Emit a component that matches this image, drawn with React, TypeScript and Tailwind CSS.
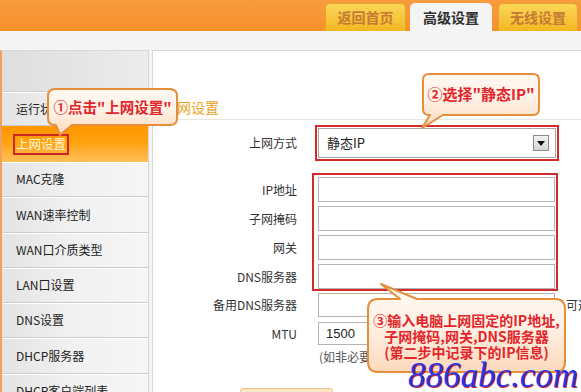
import React from "react";

function calloutPath(
  w: number,
  h: number,
  r: number,
  side: "top" | "bottom",
  b1: number,
  b2: number,
  tx: number,
  ty: number
) {
  if (side === "bottom") {
    return `M ${r} 0 H ${w - r} Q ${w} 0 ${w} ${r} V ${h - r} Q ${w} ${h} ${w - r} ${h} H ${b2} L ${tx} ${ty} L ${b1} ${h} H ${r} Q 0 ${h} 0 ${h - r} V ${r} Q 0 0 ${r} 0 Z`;
  }
  return `M ${r} 0 H ${b1} L ${tx} ${ty} L ${b2} 0 H ${w - r} Q ${w} 0 ${w} ${r} V ${h - r} Q ${w} ${h} ${w - r} ${h} H ${r} Q 0 ${h} 0 ${h - r} V ${r} Q 0 0 ${r} 0 Z`;
}

function Bubble({
  id,
  w,
  h,
  d,
}: {
  id: string;
  w: number;
  h: number;
  d: string;
}) {
  return (
    <svg
      width={w}
      height={h}
      viewBox={`0 0 ${w} ${h}`}
      className="absolute left-0 top-0 overflow-visible"
    >
      <defs>
        <linearGradient id={id} x1="0" y1="0" x2="0" y2="1">
          <stop offset="0" stopColor="#fff9f3" />
          <stop offset="0.5" stopColor="#fff0e3" />
          <stop offset="1" stopColor="#fcd9bc" />
        </linearGradient>
      </defs>
      <path d={d} fill={`url(#${id})`} stroke="#e58e3c" strokeWidth="2" strokeLinejoin="round" />
    </svg>
  );
}

const sideItems: { label: string; h: string; active?: boolean }[] = [
  { label: "运行状态", h: "h-[34px]" },
  { label: "上网设置", h: "h-[36px]", active: true },
  { label: "MAC克隆", h: "h-[35px]" },
  { label: "WAN速率控制", h: "h-[36px]" },
  { label: "WAN口介质类型", h: "h-[35px]" },
  { label: "LAN口设置", h: "h-[35px]" },
  { label: "DNS设置", h: "h-[35px]" },
  { label: "DHCP服务器", h: "h-[36px]" },
  { label: "DHCP客户端列表", h: "h-[35px]" },
];

export default function App() {
  return (
    <div className="relative w-[581px] h-[392px] overflow-hidden bg-[#f4f4f4] font-['Noto_Sans_CJK_SC',sans-serif] text-[#333]">
      {/* Header */}
      <div className="h-[31px] bg-gradient-to-b from-[#f89c3e] to-[#f8922a] flex items-end justify-end pr-[3px]">
        <div className="w-[81px] h-[28px] rounded-t-[5px] border border-b-0 border-[#e4a42a] bg-gradient-to-b from-[#fbd657] to-[#f3b71e] flex items-center justify-center text-[14px] font-bold text-[#c47a32]">
          返回首页
        </div>
        <div className="ml-[4px] w-[82px] h-[28px] rounded-t-[5px] bg-[#f4f4f4] flex items-center justify-center text-[14px] font-bold text-[#2e2e2e]">
          高级设置
        </div>
        <div className="ml-[6px] w-[80px] h-[28px] rounded-t-[5px] border border-b-0 border-[#e4a42a] bg-gradient-to-b from-[#fbd657] to-[#f3b71e] flex items-center justify-center text-[14px] font-bold text-[#c47a32]">
          无线设置
        </div>
      </div>

      {/* gray band */}
      <div className="h-[19px] bg-[#f4f4f4]" />

      {/* main */}
      <div className="flex h-[342px]">
        {/* sidebar */}
        <div className="w-[149px] shrink-0 flex flex-col border-l-2 border-[#f0a060] border-r border-r-[#d6d6d6] border-t border-t-[#d9d9d9]">
          <div className="h-[41px] shrink-0 bg-gradient-to-r from-[#dedede] to-[#ececec] border-b border-[#cfcfcf]" />
          {sideItems.map((it) =>
            it.active ? (
              <div
                key={it.label}
                className={`${it.h} shrink-0 flex items-center pl-[11px] bg-gradient-to-b from-[#ff9600] via-[#ffa410] to-[#ffbf55]`}
              >
                <span className="border-2 border-[#cf2626] px-[1px] h-[21px] flex items-center text-[12.5px] text-[#fff6d2]">
                  {it.label}
                </span>
              </div>
            ) : (
              <div
                key={it.label}
                className={`${it.h} shrink-0 flex items-center pl-[14px] text-[12px] text-[#222] bg-gradient-to-r from-[#e4e4e4] via-[#f1f1f1] to-[#f6f6f6] border-b border-[#cdcdcd] shadow-[inset_0_1px_0_#ffffff] whitespace-nowrap`}
              >
                {it.label}
              </div>
            )
          )}
        </div>

        <div className="w-[3px] shrink-0" />

        {/* content */}
        <div className="flex-1 min-w-0 bg-white border-l border-t border-[#d6d6d6] flex flex-col">
          <div className="ml-[10px] h-[69px] shrink-0 flex items-end pb-[2px] border-b border-[#e6e6e6]">
            <span className="text-[14px] leading-[20px] text-[#efa01c]">上网设置</span>
          </div>

          {/* select row */}
          <div className="mt-[5px] flex items-center">
            <div className="w-[144px] shrink-0 text-right text-[12px] text-[#333]">上网方式</div>
            <div className="ml-[18px] w-[244px] shrink-0 h-[36px] border-2 border-[#d42a2a] p-[1px]">
              <div className="w-full h-full border border-[#a8a8a8] bg-white flex items-center pl-[8px] pr-[6px]">
                <span className="text-[13px] text-[#222] flex-1">静态IP</span>
                <div className="w-[16px] h-[16px] border border-[#8a8a8a] bg-gradient-to-b from-[#f2f2f2] to-[#d6d6d6] flex items-center justify-center">
                  <svg width="8" height="5" viewBox="0 0 8 5">
                    <path d="M0 0 H8 L4 5 Z" fill="#111" />
                  </svg>
                </div>
              </div>
            </div>
          </div>

          {/* framed group */}
          <div className="mt-[12px] flex">
            <div className="w-[144px] shrink-0 pt-[4px] flex flex-col gap-[4px] text-[12px] text-[#333]">
              <div className="h-[25px] flex items-center justify-end">IP地址</div>
              <div className="h-[25px] flex items-center justify-end">子网掩码</div>
              <div className="h-[25px] flex items-center justify-end">网关</div>
              <div className="h-[25px] flex items-center justify-end">DNS服务器</div>
            </div>
            <div className="ml-[15px] w-[246px] shrink-0 border-2 border-[#d42a2a] pt-[2px] pl-[4px] pr-[1px] flex flex-col gap-[4px]">
              <div className="h-[25px] border border-[#b4b4b4] bg-white" />
              <div className="h-[25px] border border-[#b4b4b4] bg-white" />
              <div className="h-[25px] border border-[#b4b4b4] bg-white" />
              <div className="h-[25px] border border-[#b4b4b4] bg-white" />
            </div>
          </div>

          {/* backup dns */}
          <div className="mt-[2px] flex items-center">
            <div className="w-[144px] shrink-0 text-right text-[12px] text-[#333]">备用DNS服务器</div>
            <div className="ml-[21px] w-[237px] shrink-0 h-[24px] border border-[#b4b4b4] bg-white" />
            <span className="ml-[11px] text-[12px] text-[#333] whitespace-nowrap">可选</span>
          </div>

          {/* MTU */}
          <div className="mt-[5px] flex items-center">
            <div className="w-[144px] shrink-0 text-right text-[12px] text-[#333]">MTU</div>
            <div className="ml-[21px] w-[110px] shrink-0 h-[23px] border border-[#b4b4b4] bg-white flex items-center pl-[7px] text-[13px] text-[#222] font-['Liberation_Sans',sans-serif]">
              1500
            </div>
          </div>

          <div className="mt-[4px] ml-[166px] text-[12px] leading-[16px] text-[#555] whitespace-nowrap">
            (如非必要，请勿修改)
          </div>

          <div className="mt-[23px] ml-[87px] w-[93px] shrink-0 h-[20px] rounded-[3px] border border-[#f0c088] bg-[#fde6c6]" />
        </div>
      </div>

      {/* Callout 1 */}
      <div className="absolute left-[48px] top-[89px] w-[129px] h-[36px]">
        <Bubble id="g1" w={129} h={36} d={calloutPath(129, 36, 7, "bottom", 8, 24, 12, 46)} />
        <div className="relative h-full flex items-center justify-center text-[14.5px] font-bold text-[#e3262b] whitespace-nowrap">
          ①点击"上网设置"
        </div>
      </div>

      {/* Callout 2 */}
      <div className="absolute left-[423px] top-[74px] w-[116px] h-[41px]">
        <Bubble id="g2" w={116} h={41} d={calloutPath(116, 41, 6, "bottom", 7, 20, -1, 54)} />
        <div className="relative h-full flex items-center justify-center text-[15px] font-bold text-[#e3262b] whitespace-nowrap">
          ②选择"静态IP"
        </div>
      </div>

      {/* Callout 3 */}
      <div className="absolute left-[368px] top-[299px] w-[197px] h-[73px]">
        <Bubble id="g3" w={197} h={73} d={calloutPath(197, 73, 10, "top", 32, 49, 13, -15)} />
        <div className="relative h-full flex flex-col items-center justify-center text-[14px] leading-[16px] font-bold text-[#e3262b] whitespace-nowrap">
          <div>③输入电脑上网固定的IP地址,</div>
          <div>子网掩码,网关,DNS服务器</div>
          <div>(第二步中记录下的IP信息)</div>
        </div>
      </div>

      {/* watermark */}
      <div className="absolute left-[408px] top-[356px] text-[35px] leading-[40px] italic text-[#2437e6] font-['Liberation_Serif',serif] [text-shadow:1px_1px_0_#e5242a] whitespace-nowrap">
        886abc.com
      </div>
    </div>
  );
}
